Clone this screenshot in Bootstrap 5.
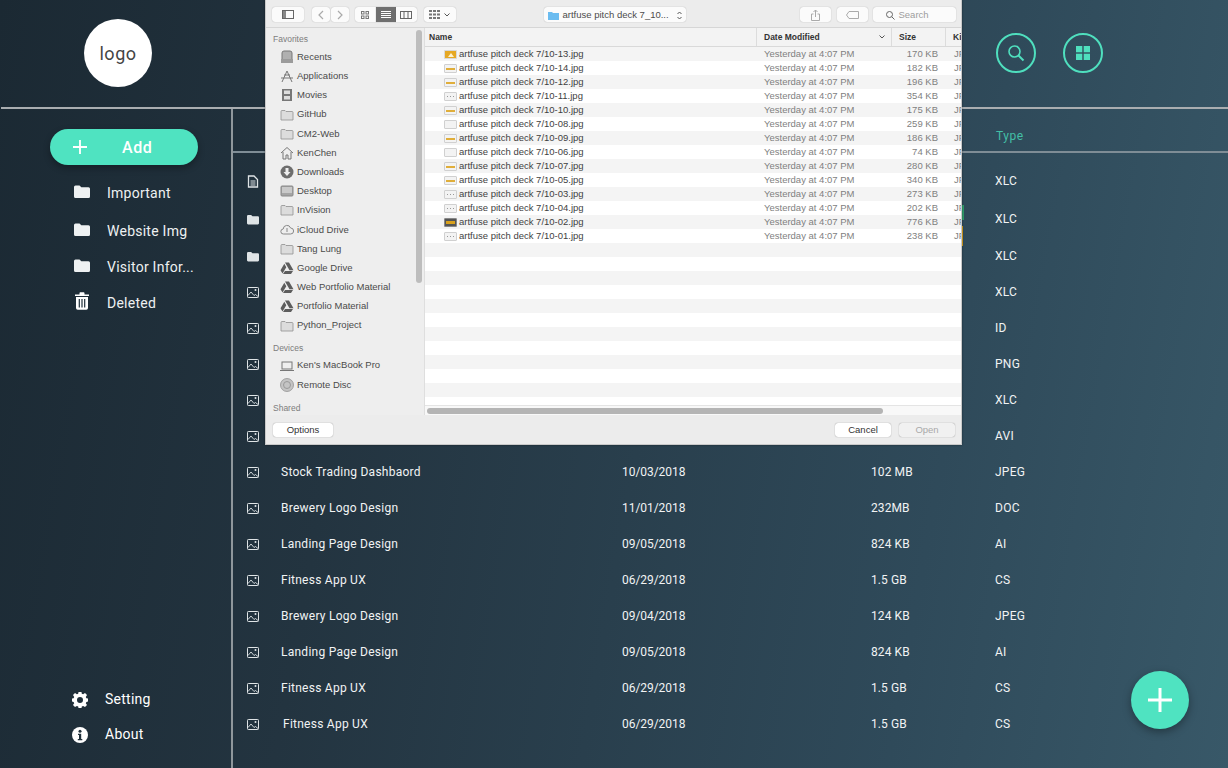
<!DOCTYPE html>
<html lang="en">
<head>
<meta charset="utf-8">
<title>Files</title>
<link rel="stylesheet" href="https://cdn.jsdelivr.net/npm/bootstrap@5.3.0/dist/css/bootstrap.min.css">
<style>
html,body{height:100%}
body{width:1228px;height:768px;overflow:hidden;position:relative;background:linear-gradient(100deg,#1b2933 0%,#233440 30%,#2f4a5a 75%,#385868 100%);font-family:Roboto,"Liberation Sans",sans-serif;color:#fff}
.app-head{height:109px;border-bottom:2px solid #a9adb0;margin-left:1px}
.logo-wrap{width:231px;padding-top:19px}
.logo-disc{width:68px;height:68px;background:#fff;color:#444;font-size:18px;letter-spacing:.5px;margin-left:83px}
.head-tools{margin-left:764px;gap:27px;padding-top:33px}
.ring{width:40px;height:40px;border:2px solid #4fdfbe}
.app-body{height:659px}
.side{width:233px;border-right:2px solid #8f979c;padding-top:20px}
.add-pill{width:148px;height:36px;margin-left:50px;background:#4fe3c1;box-shadow:0 3px 7px rgba(0,0,0,.3);font-size:16px;font-weight:500;letter-spacing:.6px}
.add-pill span{margin-left:35px;padding-top:2px}
.add-pill svg{margin-left:23px;width:14px}
.side-nav{margin-top:10px;font-size:14px;letter-spacing:.25px;color:#eef1f2}
.side-item{height:36px;padding-left:74px}
.side-item svg{margin-right:17px;flex:none;margin-bottom:3px}
.side-item svg.trash{margin-bottom:5px}
.side-item.second{margin-top:2px}
.side-low{font-size:14px;letter-spacing:.25px;margin-top:auto;padding-bottom:16px}
.low-item{height:35px;padding-left:72px}
.low-item svg{margin-right:17px}
.main-col{flex:1;min-width:0}
.col-head{height:44px;border-bottom:2px solid #7f8d96;padding:18px 0 0 763px;font-size:12px;letter-spacing:.5px;color:#43bfa6}
.rows{padding-top:10px}
.file-row{height:36px;font-size:12px;letter-spacing:.25px;color:#f1f3f4;padding-left:14px}
.file-row svg{flex:none;width:12px;color:#dfe4e6}
.row-gap2{margin-top:2px}
.row-gap1{margin-top:1px}
.c-name{width:341px;margin-left:22px;flex:none}
.c-name.nudge{padding-left:2px}
.c-date{width:249px;flex:none;letter-spacing:-.05px}
.c-size{width:124px;flex:none;letter-spacing:.1px}
.fab{position:absolute;left:1131px;top:671px;width:58px;height:58px;background:#4fe3c1;box-shadow:0 3px 8px rgba(0,0,0,.35)}

.mac{position:absolute;left:265px;top:0;width:697px;height:445px;background:#ececec;border:solid #c9c9c9;border-width:0 1px 1px 1px;font-family:"Liberation Sans",Arial,sans-serif;color:#3a3a3a;box-shadow:0 0 2px rgba(0,0,0,.4);overflow:hidden;font-size:9.5px}
.mac-bar{height:28px;padding:7px 6px 0 6px;background:#ececec;border-bottom:1px solid #d6d6d6}
.tb{height:15px;background:#fbfbfb;border-radius:3px;box-shadow:0 0 1px rgba(0,0,0,.35);color:#8f8f8f;flex:none}
.tb-side{width:32px}
.tb-nav{width:18px}
.tb-nav.fwd{margin-left:1px}
.tb-view{width:20.5px;border-radius:0}
.tb-view.on{background:#6f6f6f}
.tb-view.first{border-radius:3px 0 0 3px;margin-left:6px}
.tb-view.last{border-radius:0 3px 3px 0}
.tb-arr{width:32px;margin-left:7px}
.tb-path{width:142px;margin-left:88px;color:#4b4b4b;font-size:9.5px;padding-top:1px}
.tb-share{width:31px;margin-left:114px}
.tb-tag{width:31px;margin-left:6px}
.tb-search{width:83px;margin-left:5px;font-size:9.5px;color:#9d9d9d;padding:1px 0 0 13px}
.mac-mid{height:387px}
.mac-side{width:159px;flex:none;background:#eeeeee;position:relative;padding-top:5px;border-right:1px solid #dedede}
.mac-label{font-size:8.5px;color:#7d7d7d;padding-left:7px;height:12px;line-height:12px;margin-bottom:2.4px}
.mac-label.dev{margin-top:6.4px}
.mac-label.sha{margin-top:7.4px}
.mac-item{height:19.2px;padding-left:14px;font-size:9.5px;color:#4a4a4a}
.mac-item svg{width:14px;height:14px;margin-right:3px;flex:none}
.mac-thumb{position:absolute;left:150px;top:2px;width:6px;height:253px;background:#bdbdbd;border-radius:3px}
.mac-list{flex:1;min-width:0;background:#fff}
.list-head{height:19px;background:#f3f3f3;border-bottom:1px solid #d9d9d9;font-size:8.5px;color:#333;font-weight:700}
.lh{height:100%;border-right:1px solid #dcdcdc;flex:none}
.lh-name{width:332px;padding-left:4px}
.lh-date{width:135px;padding-left:7px;padding-right:6px}
.lh-size{width:54px;padding-left:7px}
.lh-kind{padding-left:7px;white-space:nowrap}
.stripes{height:358px;overflow:hidden;background:repeating-linear-gradient(#f4f4f4 0,#f4f4f4 14px,#fff 14px,#fff 28px)}
.lr{height:14px;font-size:9.5px;color:#3f3f3f;white-space:nowrap;padding-top:1px}
.lr-ico{width:13px;height:9px;margin-left:19px;margin-right:2px;flex:none;background:#f3f3f3;border:1px solid #d0d0d0;border-radius:1px;position:relative}
.lr-ico.bar::after{content:"";position:absolute;left:1px;right:1px;top:3px;height:2px;background:#e0ae3a}
.lr-ico.dash::after{content:"";position:absolute;left:2px;right:2px;top:3px;height:1px;background:repeating-linear-gradient(90deg,#999 0,#999 1px,transparent 1px,transparent 3px)}
.lr-ico.full{background:#e6a823;border-color:#d8d8d8}
.lr-ico.full::after{content:"";position:absolute;left:3px;top:2px;border:solid transparent;border-width:0 3px 4px;border-bottom-color:#fff3d0}
.lr-ico.dark{background:#555;border-color:#888}
.lr-ico.dark::after{content:"";position:absolute;left:1px;right:1px;top:2px;height:3px;background:#d9a11c}
.lr-name{width:305px;flex:none}
.lr-date{width:110px;flex:none;color:#7f7f7f}
.lr-size{width:64px;flex:none;text-align:right;color:#7f7f7f}
.lr-kind{margin-left:16px;color:#7f7f7f}
.hscroll{height:10px;background:#f8f8f8;border-top:1px solid #e4e4e4;padding:2px}
.hscroll div{width:456px;height:6px;border-radius:3px;background:#b4b4b4}
.mac-foot{height:29px;padding:8px 6px 0 7px;background:#ececec}
.mbtn{height:14px;width:60px;background:#fff;border-radius:3px;box-shadow:0 0 1px rgba(0,0,0,.5);font-size:9.5px;color:#333}
.mbtn.cancel{width:56px;margin-left:auto}
.mbtn.open{width:56px;margin-left:8px;background:#f1f1f1;color:#a9a9a9}
.edge-g{position:absolute;left:962px;top:205px;width:2px;height:15px;background:#2e9a6a}
.edge-o{position:absolute;left:962px;top:226px;width:1px;height:20px;background:#d9a11c}
</style>
</head>
<body>
<svg width="0" height="0" class="position-absolute">
<symbol id="i-folder" viewBox="0 0 16 13"><path fill="currentColor" d="M0 2a1.500 1.500 0 0 1 1.500-1.500h4L7.300 2.300h7.200A1.500 1.500 0 0 1 16 3.800v7.700a1.500 1.500 0 0 1-1.500 1.500h-13A1.500 1.500 0 0 1 0 11.500z"/></symbol>
<symbol id="i-pic" viewBox="0 0 12 11"><rect x=".5" y=".5" width="11" height="10" rx=".8" fill="none" stroke="currentColor"/><circle cx="8.500" cy="3" r="1" fill="currentColor"/><path d="M1 8.500l3-3.500 3 3.500 1.500-1 2.500 2" fill="none" stroke="currentColor" stroke-width=".9"/></symbol>
<symbol id="i-doc" viewBox="0 0 11 13"><path fill="none" stroke="currentColor" stroke-width="1.300" d="M1 1h5.500L10 4.500V12H1z"/><path stroke="currentColor" d="M3 6h5M3 8h5M3 10h5"/></symbol>
<symbol id="i-gdrive" viewBox="0 0 14 14"><path fill="#5d5d5d" d="M5 1.500h4l4.500 7.800h-4zM4.300 2.700l2 3.500L2.500 12.500.5 9.200zM5 10h8l-2 3H3z"/></symbol>
<symbol id="i-macfold" viewBox="0 0 14 14"><path fill="#dcdcdc" stroke="#8f8f8f" stroke-width=".8" d="M1 3.500a1 1 0 0 1 1-1h3l1 1h6a1 1 0 0 1 1 1V12H1z"/></symbol>
</svg>

<header class="app-head d-flex">
  <div class="logo-wrap">
    <div class="logo-disc rounded-circle d-flex align-items-center justify-content-center">logo</div>
  </div>
  <div class="head-tools d-flex align-items-start">
    <div class="ring rounded-circle d-flex align-items-center justify-content-center">
      <svg width="18" height="18" viewBox="0 0 18 18" fill="none" stroke="#4fdfbe" stroke-width="1.600"><circle cx="7.500" cy="7.500" r="5.500"/><path d="M11.500 11.500l5 5" stroke-width="2"/></svg>
    </div>
    <div class="ring rounded-circle d-flex align-items-center justify-content-center">
      <svg width="14" height="14" viewBox="0 0 14 14" fill="#4fdfbe"><rect width="6.300" height="6.300"/><rect x="7.700" width="6.300" height="6.300"/><rect y="7.700" width="6.300" height="6.300"/><rect x="7.700" y="7.700" width="6.300" height="6.300"/></svg>
    </div>
  </div>
</header>

<div class="app-body d-flex">
  <aside class="side d-flex flex-column flex-none">
    <div class="add-pill rounded-pill d-flex align-items-center">
      <svg height="14" viewBox="0 0 15 15" stroke="#fff" stroke-width="2"><path d="M7.500 0v15M0 7.500h15"/></svg>
      <span>Add</span>
    </div>
    <nav class="side-nav">
      <div class="side-item d-flex align-items-center"><svg width="16" height="13"><use href="#i-folder"/></svg>Important</div>
      <div class="side-item second d-flex align-items-center"><svg width="16" height="13"><use href="#i-folder"/></svg>Website Img</div>
      <div class="side-item d-flex align-items-center"><svg width="16" height="13"><use href="#i-folder"/></svg>Visitor Infor...</div>
      <div class="side-item d-flex align-items-center"><svg class="trash" width="16" height="18" viewBox="0 0 16 18"><path fill="#fff" d="M1 2.500h4.500V1.200C5.500.6 6 .2 6.500.2h3c.5 0 1 .4 1 1v1.300H15v1.500H1zM2 5h12v11a1.700 1.700 0 0 1-1.700 1.700H3.700A1.700 1.700 0 0 1 2 16z"/><path stroke="#1f2f3a" stroke-width="1.200" d="M5.300 7v8.500M8 7v8.500M10.700 7v8.500"/></svg>Deleted</div>
    </nav>
    <div class="side-low">
      <div class="low-item d-flex align-items-center"><svg width="16" height="16" viewBox="0 0 16 16"><path fill="#fff" fill-rule="evenodd" d="M6.600 0h2.800l.4 2.200 1.300.6 1.900-1.200 2 2-1.200 1.900.6 1.300 2.100.4v2.800l-2.100.4-.6 1.300 1.200 1.900-2 2-1.900-1.200-1.300.6-.4 2.200H6.600l-.4-2.200-1.300-.6L3 15.600l-2-2 1.200-1.900-.6-1.300L-.5 10V7.200l2.100-.4.600-1.300L1 3.600l2-2 1.900 1.200 1.300-.6zM8 5.500a3 3 0 1 0 0 6 3 3 0 0 0 0-6z" transform="translate(0 -.5)"/></svg>Setting</div>
      <div class="low-item d-flex align-items-center"><svg width="16" height="16" viewBox="0 0 16 16"><circle cx="8" cy="8" r="8" fill="#fff"/><circle cx="8" cy="4.300" r="1.500" fill="#1f2f3a"/><path fill="#1f2f3a" d="M6 6.800h3.200v5.200H10.300v1.300H5.800V12h1.200V8.100H6z"/></svg>About</div>
    </div>
  </aside>

  <main class="main-col">
    <div class="col-head">Type</div>
    <div class="rows">
      <div class="file-row d-flex align-items-center"><svg height="13"><use href="#i-doc"/></svg><div class="c-name">Project Proposal</div><div class="c-date">10/03/2018</div><div class="c-size">102 MB</div><div>XLC</div></div>
      <div class="file-row row-gap2 d-flex align-items-center"><svg height="11"><use href="#i-folder"/></svg><div class="c-name">Important</div><div class="c-date">11/01/2018</div><div class="c-size">232MB</div><div>XLC</div></div>
      <div class="file-row row-gap1 d-flex align-items-center"><svg height="11"><use href="#i-folder"/></svg><div class="c-name">Website Img</div><div class="c-date">09/05/2018</div><div class="c-size">824 KB</div><div>XLC</div></div>
      <div class="file-row d-flex align-items-center"><svg height="11"><use href="#i-pic"/></svg><div class="c-name">Fitness App UX</div><div class="c-date">06/29/2018</div><div class="c-size">1.5 GB</div><div>XLC</div></div>
      <div class="file-row d-flex align-items-center"><svg height="11"><use href="#i-pic"/></svg><div class="c-name">Brewery Logo Design</div><div class="c-date">09/04/2018</div><div class="c-size">124 KB</div><div>ID</div></div>
      <div class="file-row d-flex align-items-center"><svg height="11"><use href="#i-pic"/></svg><div class="c-name">Landing Page Design</div><div class="c-date">09/05/2018</div><div class="c-size">824 KB</div><div>PNG</div></div>
      <div class="file-row d-flex align-items-center"><svg height="11"><use href="#i-pic"/></svg><div class="c-name">Fitness App UX</div><div class="c-date">06/29/2018</div><div class="c-size">1.5 GB</div><div>XLC</div></div>
      <div class="file-row d-flex align-items-center"><svg height="11"><use href="#i-pic"/></svg><div class="c-name">Brewery Logo Design</div><div class="c-date">11/01/2018</div><div class="c-size">232MB</div><div>AVI</div></div>
      <div class="file-row d-flex align-items-center"><svg height="11"><use href="#i-pic"/></svg><div class="c-name">Stock Trading Dashbaord</div><div class="c-date">10/03/2018</div><div class="c-size">102 MB</div><div>JPEG</div></div>
      <div class="file-row d-flex align-items-center"><svg height="11"><use href="#i-pic"/></svg><div class="c-name">Brewery Logo Design</div><div class="c-date">11/01/2018</div><div class="c-size">232MB</div><div>DOC</div></div>
      <div class="file-row d-flex align-items-center"><svg height="11"><use href="#i-pic"/></svg><div class="c-name">Landing Page Design</div><div class="c-date">09/05/2018</div><div class="c-size">824 KB</div><div>AI</div></div>
      <div class="file-row d-flex align-items-center"><svg height="11"><use href="#i-pic"/></svg><div class="c-name">Fitness App UX</div><div class="c-date">06/29/2018</div><div class="c-size">1.5 GB</div><div>CS</div></div>
      <div class="file-row d-flex align-items-center"><svg height="11"><use href="#i-pic"/></svg><div class="c-name">Brewery Logo Design</div><div class="c-date">09/04/2018</div><div class="c-size">124 KB</div><div>JPEG</div></div>
      <div class="file-row d-flex align-items-center"><svg height="11"><use href="#i-pic"/></svg><div class="c-name">Landing Page Design</div><div class="c-date">09/05/2018</div><div class="c-size">824 KB</div><div>AI</div></div>
      <div class="file-row d-flex align-items-center"><svg height="11"><use href="#i-pic"/></svg><div class="c-name">Fitness App UX</div><div class="c-date">06/29/2018</div><div class="c-size">1.5 GB</div><div>CS</div></div>
      <div class="file-row d-flex align-items-center"><svg height="11"><use href="#i-pic"/></svg><div class="c-name nudge">Fitness App UX</div><div class="c-date">06/29/2018</div><div class="c-size">1.5 GB</div><div>CS</div></div>
    </div>
  </main>
</div>

<div class="fab rounded-circle d-flex align-items-center justify-content-center">
  <svg width="24" height="24" viewBox="0 0 24 24" stroke="#fff" stroke-width="3"><path d="M12 0v24M0 12h24"/></svg>
</div>

<div class="edge-g"></div>
<div class="edge-o"></div>

<section class="mac d-flex flex-column">
  <div class="mac-bar d-flex">
    <div class="tb tb-side d-flex align-items-center justify-content-center"><svg width="12" height="9" viewBox="0 0 12 9" fill="none" stroke="#666"><rect x=".5" y=".5" width="11" height="8"/><rect x="1" y="1" width="3" height="7" fill="#888" stroke="none"/></svg></div>
    <div class="tb tb-nav ms-2 d-flex align-items-center justify-content-center"><svg width="6" height="10" viewBox="0 0 6 10" fill="none" stroke="#aaa" stroke-width="1.200"><path d="M5 1L1 5l4 4"/></svg></div>
    <div class="tb tb-nav fwd d-flex align-items-center justify-content-center"><svg width="6" height="10" viewBox="0 0 6 10" fill="none" stroke="#aaa" stroke-width="1.200"><path d="M1 1l4 4-4 4"/></svg></div>
    <div class="tb tb-view first d-flex align-items-center justify-content-center"><svg width="8" height="8" viewBox="0 0 8 8" fill="none" stroke="#777"><rect x=".5" y=".5" width="2.500" height="2.500"/><rect x="5" y=".5" width="2.500" height="2.500"/><rect x=".5" y="5" width="2.500" height="2.500"/><rect x="5" y="5" width="2.500" height="2.500"/></svg></div>
    <div class="tb tb-view on d-flex align-items-center justify-content-center"><svg width="10" height="8" viewBox="0 0 10 8" stroke="#fff"><path d="M0 .5h10M0 2.500h10M0 4.500h10M0 6.500h10"/></svg></div>
    <div class="tb tb-view last d-flex align-items-center justify-content-center"><svg width="12" height="8" viewBox="0 0 12 8" fill="none" stroke="#666"><rect x=".5" y=".5" width="11" height="7"/><path d="M4 .5v7M8 .5v7"/></svg></div>
    <div class="tb tb-arr d-flex align-items-center justify-content-center gap-1"><svg width="11" height="9" viewBox="0 0 11 9" fill="#777"><rect width="3" height="2"/><rect x="4" width="3" height="2"/><rect x="8" width="3" height="2"/><rect y="3.500" width="3" height="2"/><rect x="4" y="3.500" width="3" height="2"/><rect x="8" y="3.500" width="3" height="2"/><rect y="7" width="3" height="2"/><rect x="4" y="7" width="3" height="2"/><rect x="8" y="7" width="3" height="2"/></svg><svg width="6" height="4" viewBox="0 0 6 4" fill="none" stroke="#555"><path d="M.5.500l2.500 2.500L5.500.5"/></svg></div>
    <div class="tb tb-path d-flex align-items-center ps-1"><svg class="me-1" width="11" height="9" viewBox="0 0 11 9"><path fill="#6bbcf0" d="M0 1h4l1 1h6v7H0z"/></svg>artfuse pitch deck 7_10...<svg class="ms-auto me-1" width="5" height="9" viewBox="0 0 5 9" fill="none" stroke="#555"><path d="M.5 3l2-2 2 2M.5 6l2 2 2-2"/></svg></div>
    <div class="tb tb-share d-flex align-items-center justify-content-center"><svg width="9" height="12" viewBox="0 0 9 12" fill="none" stroke="#aaa"><path d="M4.500 8V1M2.500 3l2-2 2 2M2.500 5H.5v6.500h8V5h-2"/></svg></div>
    <div class="tb tb-tag d-flex align-items-center justify-content-center"><svg width="13" height="8" viewBox="0 0 13 8" fill="none" stroke="#aaa"><path d="M3 .5h9.500v7H3L.5 4z"/></svg></div>
    <div class="tb tb-search d-flex align-items-center gap-1"><svg width="9" height="9" viewBox="0 0 9 9" fill="none" stroke="#666"><circle cx="3.500" cy="3.500" r="3"/><path d="M5.700 5.700L8.500 8.500"/></svg>Search</div>
  </div>
  <div class="mac-mid d-flex">
    <div class="mac-side">
      <div class="mac-thumb"></div>
      <div class="mac-label">Favorites</div>
      <div class="mac-item d-flex align-items-center"><svg viewBox="0 0 14 14"><rect x="2" y="1" width="10" height="10" rx="2" fill="#b0b0b0" stroke="#777"/><rect x="1" y="9" width="12" height="4" fill="#9b9b9b"/></svg>Recents</div>
      <div class="mac-item d-flex align-items-center"><svg viewBox="0 0 14 14" fill="none" stroke="#777"><path d="M2 13L7 2l5 11M1 9h12M4 6h6"/></svg>Applications</div>
      <div class="mac-item d-flex align-items-center"><svg viewBox="0 0 14 14"><rect x="2" y="1" width="10" height="12" fill="#777"/><rect x="4" y="2.500" width="6" height="3.500" fill="#ddd"/><rect x="4" y="8" width="6" height="3.500" fill="#ddd"/></svg>Movies</div>
      <div class="mac-item d-flex align-items-center"><svg><use href="#i-macfold"/></svg>GitHub</div>
      <div class="mac-item d-flex align-items-center"><svg><use href="#i-macfold"/></svg>CM2-Web</div>
      <div class="mac-item d-flex align-items-center"><svg viewBox="0 0 14 14" fill="none" stroke="#777"><path d="M1 7l6-5.500L13 7M3 6v7h3V9h2v4h3V6"/></svg>KenChen</div>
      <div class="mac-item d-flex align-items-center"><svg viewBox="0 0 14 14"><circle cx="7" cy="7" r="6.500" fill="#6d6d6d"/><path fill="#eee" d="M5.500 3h3v4h2L7 11 3.500 7h2z"/></svg>Downloads</div>
      <div class="mac-item d-flex align-items-center"><svg viewBox="0 0 14 14"><rect x="1" y="2" width="12" height="10" rx="1" fill="#a5a5a5" stroke="#888"/><rect x="2" y="3" width="10" height="6" fill="#c9c9c9"/></svg>Desktop</div>
      <div class="mac-item d-flex align-items-center"><svg><use href="#i-macfold"/></svg>InVision</div>
      <div class="mac-item d-flex align-items-center"><svg viewBox="0 0 14 14" fill="none" stroke="#888"><path d="M3.500 11a2.500 2.500 0 0 1-.3-5A3.800 3.800 0 0 1 10.600 5a3 3 0 0 1 0 6zM7 9V5"/></svg>iCloud Drive</div>
      <div class="mac-item d-flex align-items-center"><svg><use href="#i-macfold"/></svg>Tang Lung</div>
      <div class="mac-item d-flex align-items-center"><svg><use href="#i-gdrive"/></svg>Google Drive</div>
      <div class="mac-item d-flex align-items-center"><svg><use href="#i-gdrive"/></svg>Web Portfolio Material</div>
      <div class="mac-item d-flex align-items-center"><svg><use href="#i-gdrive"/></svg>Portfolio Material</div>
      <div class="mac-item d-flex align-items-center"><svg><use href="#i-macfold"/></svg>Python_Project</div>
      <div class="mac-label dev">Devices</div>
      <div class="mac-item d-flex align-items-center"><svg viewBox="0 0 14 14" fill="none" stroke="#777"><rect x="2" y="3" width="10" height="7" fill="#eee"/><path d="M0 11.500h14"/></svg>Ken's MacBook Pro</div>
      <div class="mac-item d-flex align-items-center"><svg viewBox="0 0 14 14"><circle cx="7" cy="7" r="6.500" fill="#c4c4c4" stroke="#888" stroke-width=".7"/><circle cx="7" cy="7" r="3.500" fill="none" stroke="#999"/></svg>Remote Disc</div>
      <div class="mac-label sha">Shared</div>
    </div>
    <div class="mac-list d-flex flex-column">
      <div class="list-head d-flex align-items-center">
        <div class="lh lh-name d-flex align-items-center">Name</div>
        <div class="lh lh-date d-flex align-items-center justify-content-between">Date Modified<svg width="6" height="4" viewBox="0 0 6 4" fill="none" stroke="#555"><path d="M.5.500L3 3 5.500.5"/></svg></div>
        <div class="lh lh-size d-flex align-items-center">Size</div>
        <div class="lh-kind">Kind</div>
      </div>
      <div class="stripes">
        <div class="lr d-flex align-items-center"><span class="lr-ico full"></span><span class="lr-name">artfuse pitch deck 7/10-13.jpg</span><span class="lr-date">Yesterday at 4:07 PM</span><span class="lr-size">170 KB</span><span class="lr-kind">JPEG</span></div>
        <div class="lr d-flex align-items-center"><span class="lr-ico bar"></span><span class="lr-name">artfuse pitch deck 7/10-14.jpg</span><span class="lr-date">Yesterday at 4:07 PM</span><span class="lr-size">182 KB</span><span class="lr-kind">JPEG</span></div>
        <div class="lr d-flex align-items-center"><span class="lr-ico bar"></span><span class="lr-name">artfuse pitch deck 7/10-12.jpg</span><span class="lr-date">Yesterday at 4:07 PM</span><span class="lr-size">196 KB</span><span class="lr-kind">JPEG</span></div>
        <div class="lr d-flex align-items-center"><span class="lr-ico dash"></span><span class="lr-name">artfuse pitch deck 7/10-11.jpg</span><span class="lr-date">Yesterday at 4:07 PM</span><span class="lr-size">354 KB</span><span class="lr-kind">JPEG</span></div>
        <div class="lr d-flex align-items-center"><span class="lr-ico bar"></span><span class="lr-name">artfuse pitch deck 7/10-10.jpg</span><span class="lr-date">Yesterday at 4:07 PM</span><span class="lr-size">175 KB</span><span class="lr-kind">JPEG</span></div>
        <div class="lr d-flex align-items-center"><span class="lr-ico"></span><span class="lr-name">artfuse pitch deck 7/10-08.jpg</span><span class="lr-date">Yesterday at 4:07 PM</span><span class="lr-size">259 KB</span><span class="lr-kind">JPEG</span></div>
        <div class="lr d-flex align-items-center"><span class="lr-ico bar"></span><span class="lr-name">artfuse pitch deck 7/10-09.jpg</span><span class="lr-date">Yesterday at 4:07 PM</span><span class="lr-size">186 KB</span><span class="lr-kind">JPEG</span></div>
        <div class="lr d-flex align-items-center"><span class="lr-ico"></span><span class="lr-name">artfuse pitch deck 7/10-06.jpg</span><span class="lr-date">Yesterday at 4:07 PM</span><span class="lr-size">74 KB</span><span class="lr-kind">JPEG</span></div>
        <div class="lr d-flex align-items-center"><span class="lr-ico bar"></span><span class="lr-name">artfuse pitch deck 7/10-07.jpg</span><span class="lr-date">Yesterday at 4:07 PM</span><span class="lr-size">280 KB</span><span class="lr-kind">JPEG</span></div>
        <div class="lr d-flex align-items-center"><span class="lr-ico bar"></span><span class="lr-name">artfuse pitch deck 7/10-05.jpg</span><span class="lr-date">Yesterday at 4:07 PM</span><span class="lr-size">340 KB</span><span class="lr-kind">JPEG</span></div>
        <div class="lr d-flex align-items-center"><span class="lr-ico dash"></span><span class="lr-name">artfuse pitch deck 7/10-03.jpg</span><span class="lr-date">Yesterday at 4:07 PM</span><span class="lr-size">273 KB</span><span class="lr-kind">JPEG</span></div>
        <div class="lr d-flex align-items-center"><span class="lr-ico dash"></span><span class="lr-name">artfuse pitch deck 7/10-04.jpg</span><span class="lr-date">Yesterday at 4:07 PM</span><span class="lr-size">202 KB</span><span class="lr-kind">JPEG</span></div>
        <div class="lr d-flex align-items-center"><span class="lr-ico dark"></span><span class="lr-name">artfuse pitch deck 7/10-02.jpg</span><span class="lr-date">Yesterday at 4:07 PM</span><span class="lr-size">776 KB</span><span class="lr-kind">JPEG</span></div>
        <div class="lr d-flex align-items-center"><span class="lr-ico dash"></span><span class="lr-name">artfuse pitch deck 7/10-01.jpg</span><span class="lr-date">Yesterday at 4:07 PM</span><span class="lr-size">238 KB</span><span class="lr-kind">JPEG</span></div>
      </div>
      <div class="hscroll"><div></div></div>
    </div>
  </div>
  <div class="mac-foot d-flex">
    <div class="mbtn d-flex align-items-center justify-content-center">Options</div>
    <div class="mbtn cancel d-flex align-items-center justify-content-center">Cancel</div>
    <div class="mbtn open d-flex align-items-center justify-content-center">Open</div>
  </div>
</section>
<script src="https://cdn.jsdelivr.net/npm/bootstrap@5.3.0/dist/js/bootstrap.bundle.min.js"></script>
</body>
</html>
